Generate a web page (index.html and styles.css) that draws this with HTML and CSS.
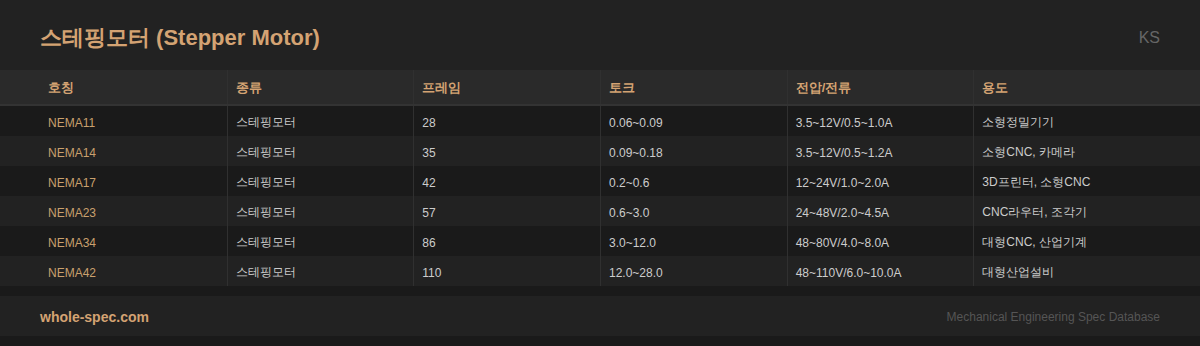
FILE: index.html
```html
<!DOCTYPE html>
<html lang="ko">
<head>
<meta charset="utf-8">
<title>스테핑모터 (Stepper Motor)</title>
<link rel="stylesheet" href="styles.css">
</head>
<body>
<header class="top">
  <h1 class="title">스테핑모터 (Stepper Motor)</h1>
  <span class="std">KS</span>
</header>
<div class="table">
  <div class="row head">
    <div class="cell">호칭</div>
    <div class="cell">종류</div>
    <div class="cell">프레임</div>
    <div class="cell">토크</div>
    <div class="cell">전압/전류</div>
    <div class="cell">용도</div>
  </div>
  <div class="row odd">
    <div class="cell name">NEMA11</div>
    <div class="cell">스테핑모터</div>
    <div class="cell">28</div>
    <div class="cell">0.06~0.09</div>
    <div class="cell">3.5~12V/0.5~1.0A</div>
    <div class="cell">소형정밀기기</div>
  </div>
  <div class="row even">
    <div class="cell name">NEMA14</div>
    <div class="cell">스테핑모터</div>
    <div class="cell">35</div>
    <div class="cell">0.09~0.18</div>
    <div class="cell">3.5~12V/0.5~1.2A</div>
    <div class="cell">소형CNC, 카메라</div>
  </div>
  <div class="row odd">
    <div class="cell name">NEMA17</div>
    <div class="cell">스테핑모터</div>
    <div class="cell">42</div>
    <div class="cell">0.2~0.6</div>
    <div class="cell">12~24V/1.0~2.0A</div>
    <div class="cell">3D프린터, 소형CNC</div>
  </div>
  <div class="row even">
    <div class="cell name">NEMA23</div>
    <div class="cell">스테핑모터</div>
    <div class="cell">57</div>
    <div class="cell">0.6~3.0</div>
    <div class="cell">24~48V/2.0~4.5A</div>
    <div class="cell">CNC라우터, 조각기</div>
  </div>
  <div class="row odd">
    <div class="cell name">NEMA34</div>
    <div class="cell">스테핑모터</div>
    <div class="cell">86</div>
    <div class="cell">3.0~12.0</div>
    <div class="cell">48~80V/4.0~8.0A</div>
    <div class="cell">대형CNC, 산업기계</div>
  </div>
  <div class="row even">
    <div class="cell name">NEMA42</div>
    <div class="cell">스테핑모터</div>
    <div class="cell">110</div>
    <div class="cell">12.0~28.0</div>
    <div class="cell">48~110V/6.0~10.0A</div>
    <div class="cell">대형산업설비</div>
  </div>
</div>
<footer class="foot">
  <span class="site">whole-spec.com</span>
  <span class="tag">Mechanical Engineering Spec Database</span>
</footer>
</body>
</html>
```

FILE: styles.css
```css
* { box-sizing: border-box; }
html, body { margin: 0; padding: 0; }
body {
  background: #1a1a1a;
  font-family: "Liberation Sans", sans-serif;
  color: #cccccc;
  width: 1200px;
  height: 346px;
  overflow: hidden;
}
.top {
  height: 70px;
  background: #222222;
  padding: 6px 40px 0;
  display: flex;
  align-items: center;
  justify-content: space-between;
}
.title {
  margin: 0;
  font-size: 22px;
  font-weight: bold;
  line-height: 26px;
  color: #d4a373;
}
.std {
  font-size: 16px;
  color: #666666;
}
.table { display: flex; flex-direction: column; }
.row {
  display: grid;
  grid-template-columns: repeat(6, 1fr);
  padding: 0 40px;
  height: 30px;
}
.row.head {
  height: 36px;
  background: #2a2a2a;
  border-bottom: 2px solid #333333;
}
.row.odd { background: #1a1a1a; }
.row.even { background: #222222; }
.cell {
  display: flex;
  align-items: center;
  padding: 3px 8px 0;
  font-size: 12px;
  color: #cccccc;
  white-space: nowrap;
}
.cell + .cell { border-left: 1px solid #303030; }
.head .cell {
  padding-top: 2px;
  font-size: 13px;
  font-weight: bold;
  color: #d4a373;
}
.cell.name { color: #c9a06e; }
.foot {
  margin-top: 10px;
  height: 40px;
  background: #222222;
  padding: 2px 40px 0;
  display: flex;
  align-items: center;
  justify-content: space-between;
}
.site {
  font-size: 14px;
  font-weight: bold;
  color: #d4a373;
}
.tag {
  font-size: 12px;
  color: #555555;
}
```
